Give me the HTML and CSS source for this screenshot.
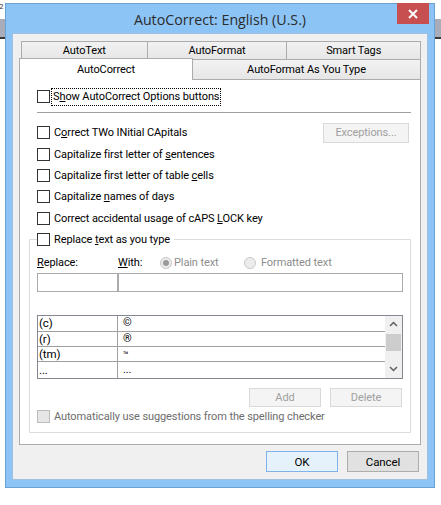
FILE: index.html
```html
<!DOCTYPE html>
<html>
<head>
<meta charset="utf-8">
<link rel="stylesheet" href="styles.css">
</head>
<body>
<div class="desktop">
  <span class="stray">2</span>
  <div class="band"></div>
  <div class="window">
    <div class="titlebar">
      <span class="title">AutoCorrect: English (U.S.)</span>
      <div class="close"><svg width="10" height="10" viewBox="0 0 10 10"><path d="M1 1 L9 9 M9 1 L1 9" stroke="#fff" stroke-width="2"/></svg></div>
    </div>
    <div class="client">
      <div class="tabs">
        <div class="tabrow back">
          <div class="tab t-autotext">AutoText</div>
          <div class="tab t-autoformat">AutoFormat</div>
          <div class="tab t-smart">Smart Tags</div>
        </div>
        <div class="tabrow front">
          <div class="tab selected t-autocorrect">AutoCorrect</div>
          <div class="tab t-asyoutype">AutoFormat As You Type</div>
        </div>
      </div>
      <div class="panel">
        <div class="row first">
          <span class="cb"></span>
          <span class="label focus">S<u>h</u>ow AutoCorrect Options buttons</span>
        </div>
        <div class="sep"></div>
        <div class="rows">
          <div class="row">
            <span class="cb"></span>
            <span class="label">C<u>o</u>rrect TWo INitial CApitals</span>
            <span class="btn disabled exceptions">Exceptions...</span>
          </div>
          <div class="row"><span class="cb"></span><span class="label">Capitalize first letter of <u>s</u>entences</span></div>
          <div class="row"><span class="cb"></span><span class="label">Capitalize first letter of table <u>c</u>ells</span></div>
          <div class="row"><span class="cb"></span><span class="label">Capitalize <u>n</u>ames of days</span></div>
          <div class="row"><span class="cb"></span><span class="label">Correct accidental usage of cAPS <u>L</u>OCK key</span></div>
        </div>
        <div class="group">
          <div class="row legend"><span class="cb"></span><span class="label">Replace <u>t</u>ext as you type</span></div>
          <div class="labels">
            <span class="lbl-replace"><u>R</u>eplace:</span>
            <span class="lbl-with"><u>W</u>ith:</span>
            <span class="radio on"></span><span class="dis rlabel plain">Plain text</span>
            <span class="radio off"></span><span class="dis rlabel">Formatted text</span>
          </div>
          <div class="inputs">
            <div class="input in-replace"></div>
            <div class="input in-with"></div>
          </div>
          <div class="list">
            <div class="items">
              <div class="item"><span class="c1">(c)</span><span class="c2">©</span></div>
              <div class="item"><span class="c1">(r)</span><span class="c2">®</span></div>
              <div class="item"><span class="c1">(tm)</span><span class="c2 tm">™</span></div>
              <div class="item last"><span class="c1">...</span><span class="c2">...</span></div>
            </div>
            <div class="scrollbar">
              <div class="arrow"><svg width="9" height="6" viewBox="0 0 9 6"><path d="M1 5 L4.5 1.5 L8 5" fill="none" stroke="#606060" stroke-width="1.5"/></svg></div>
              <div class="track"><div class="thumb"></div></div>
              <div class="arrow"><svg width="9" height="6" viewBox="0 0 9 6"><path d="M1 1 L4.5 4.5 L8 1" fill="none" stroke="#606060" stroke-width="1.5"/></svg></div>
            </div>
          </div>
          <div class="listbtns">
            <span class="btn disabled small">Add</span>
            <span class="btn disabled small">Delete</span>
          </div>
          <div class="row auto"><span class="cb dcb"></span><span class="label dtext">Automatically use suggestions from the spelling checker</span></div>
        </div>
      </div>
      <div class="footer">
        <span class="btn ok">OK</span>
        <span class="btn cancel">Cancel</span>
      </div>
    </div>
  </div>
</div>
</body>
</html>
```
FILE: styles.css
```css
* { box-sizing: border-box; }
html, body { margin: 0; padding: 0; background: #fff; }
body {
  font-family: Roboto, "Open Sans", sans-serif;
  font-size: 11px;
  letter-spacing: -0.1px;
  color: #000;
  width: 441px;
  height: 505px;
  overflow: hidden;
}
.desktop { position: relative; width: 441px; height: 505px; }
.stray {
  position: absolute; left: -1px; top: 2px;
  font-size: 8px; line-height: 10px; color: #333;
}
.band {
  position: absolute; left: 0; top: 19px; width: 441px; height: 20px;
  background: #a9adba;
  border-bottom: 2px solid #3a3a3a;
}
.window {
  position: absolute; left: 5px; top: 3px;
  width: 430px; height: 485px;
  background: #8dc4f6;
  border: 1px solid #6aa2d6;
  padding: 0 6px 7px 6px;
  display: flex; flex-direction: column;
}
.titlebar {
  height: 29px;
  display: flex; align-items: center; justify-content: center;
  position: relative;
}
.title { font-family: "Open Sans", sans-serif; font-size: 14.2px; letter-spacing: 0; color: #2b2b2b; margin-top: 1px; }
.close {
  position: absolute; right: -1px; top: -1px;
  width: 32px; height: 21px;
  background: #c74f4f;
  display: flex; align-items: center; justify-content: center;
}
.client {
  flex: 1;
  background: #f0f0f0;
  border: 1px solid #9fc0e0;
  padding: 7px 6px 7px 6px;
  display: flex; flex-direction: column;
}
.tabs { display: flex; flex-direction: column; }
.tabrow { display: flex; }
.tab {
  display: flex; align-items: center; justify-content: center;
  border: 1px solid #acacac; border-bottom: none;
  background: linear-gradient(#f2f2f2, #e6e6e6);
  color: #000;
}
.back { padding-left: 2px; height: 18px; }
.back .tab { height: 18px; }
.back .tab + .tab { border-left: none; }
.t-autotext { width: 127px; }
.t-autoformat { width: 140px; }
.t-smart { width: 134px; }
.front { height: 20px; align-items: flex-end; position: relative; z-index: 2; }
.front .tab { height: 20px; }
.t-autocorrect { width: 174px; }
.t-asyoutype { width: 228px; border-left: none; }
.tab.selected {
  background: #fff;
  height: 22px;
  margin-bottom: -1px;
  padding-bottom: 1px;
}
.panel {
  height: 366px;
  background: #fff;
  border: 1px solid #acacac;
  padding: 6px 9px 0 9px;
  display: flex; flex-direction: column;
  position: relative; z-index: 1;
}
.row {
  display: flex; align-items: center;
  height: 21.4px;
  padding-left: 8px;
}
.row.first { height: 21px; }
.cb {
  width: 13px; height: 13px;
  border: 1px solid #333;
  background: #fff;
  flex: none;
}
.label { margin-left: 4px; white-space: nowrap; }
.focus { outline: 1px dotted #000; outline-offset: 0; padding: 0 1px; margin-left: 2px; line-height: 16px; }
u { text-decoration: underline; text-underline-offset: 1px; }
.sep { height: 1px; background: #a0a0a0; margin: 5px 0 9px 8px; }
.btn {
  display: inline-flex; align-items: center; justify-content: center;
  border: 1px solid #adadad;
  background: #e1e1e1;
  white-space: nowrap;
}
.btn.disabled { background: #f4f4f4; border-color: #d9d9d9; color: #a0a0a0; }
.exceptions { margin-left: auto; margin-right: 2px; width: 86px; height: 20px; }
.group {
  border: 1px solid #dcdcdc;
  margin-top: 10px;
  height: 194px;
  padding: 0 7px 0 7px;
  display: flex; flex-direction: column;
}
.group .row { padding-left: 0; }
.legend {
  margin-top: -11px;
  height: 21px;
  align-self: flex-start;
  background: #fff;
  padding-right: 4px;
  margin-left: 0;
}
.labels {
  display: flex; align-items: center;
  height: 16px; margin-top: 5px;
}
.labels > * { flex: none; }
.lbl-replace { width: 81px; }
.lbl-with { width: 42px; }
.radio {
  width: 12px; height: 12px; border-radius: 50%;
  border: 1px solid #c8c8c8;
  background: #ececec;
  display: flex; align-items: center; justify-content: center;
}
.radio.on::after {
  content: ""; width: 6px; height: 6px; border-radius: 50%; background: #9a9a9a;
}
.dis { color: #8d8d8d; }
.rlabel { margin-left: 2px; }
.rlabel.plain { width: 70px; }
.labels .radio.off + .rlabel { margin-left: 5px; }
.inputs { display: flex; margin-top: 2px; height: 19px; }
.input { border: 1px solid #ababab; height: 19px; background: #fff; }
.in-replace { width: 81px; }
.in-with { flex: 1; }
.list {
  margin-top: 23px;
  height: 64px;
  border: 1px solid #828790;
  display: flex;
  background: #fff;
}
.items { flex: 1; display: flex; flex-direction: column; }
.item {
  display: flex; height: 15px; align-items: center;
  border-bottom: 1px solid #a0a0a0;
  line-height: 14px;
  font-size: 11.5px;
}
.item:first-child { height: 16px; }
.item.last { border-bottom: none; flex: 1; }
.c1 { width: 80px; height: 100%; border-right: 1px solid #a0a0a0; padding-left: 1px; display: flex; align-items: center; }
.c2 { padding-left: 5px; display: flex; align-items: center; font-size: 11px; }
.c2.tm { font-size: 9px; align-self: flex-start; padding-top: 1px; }
.scrollbar {
  width: 17px; background: #f0f0f0;
  display: flex; flex-direction: column;
}
.arrow { height: 17px; display: flex; align-items: center; justify-content: center; }
.track { flex: 1; }
.thumb { height: 17px; background: #cdcdcd; margin: 1px 1px 0 1px; }
.listbtns {
  display: flex; justify-content: flex-end;
  gap: 9px;
  margin-top: 9px; padding-right: 1px;
}
.btn.small { width: 72px; height: 19px; }
.auto { margin-top: 1px; height: 17px; }
.dcb { background: #e6e6e6; border-color: #bcbcbc; }
.dtext { color: #6d6d6d; }
.footer {
  display: flex; justify-content: flex-end;
  gap: 9px;
  margin-top: 6px; padding-right: 2px;
}
.footer .btn { width: 72px; height: 21px; font-size: 11.5px; }
.btn.ok { background: #e5f1fb; border-color: #7eb4ea; }
```
